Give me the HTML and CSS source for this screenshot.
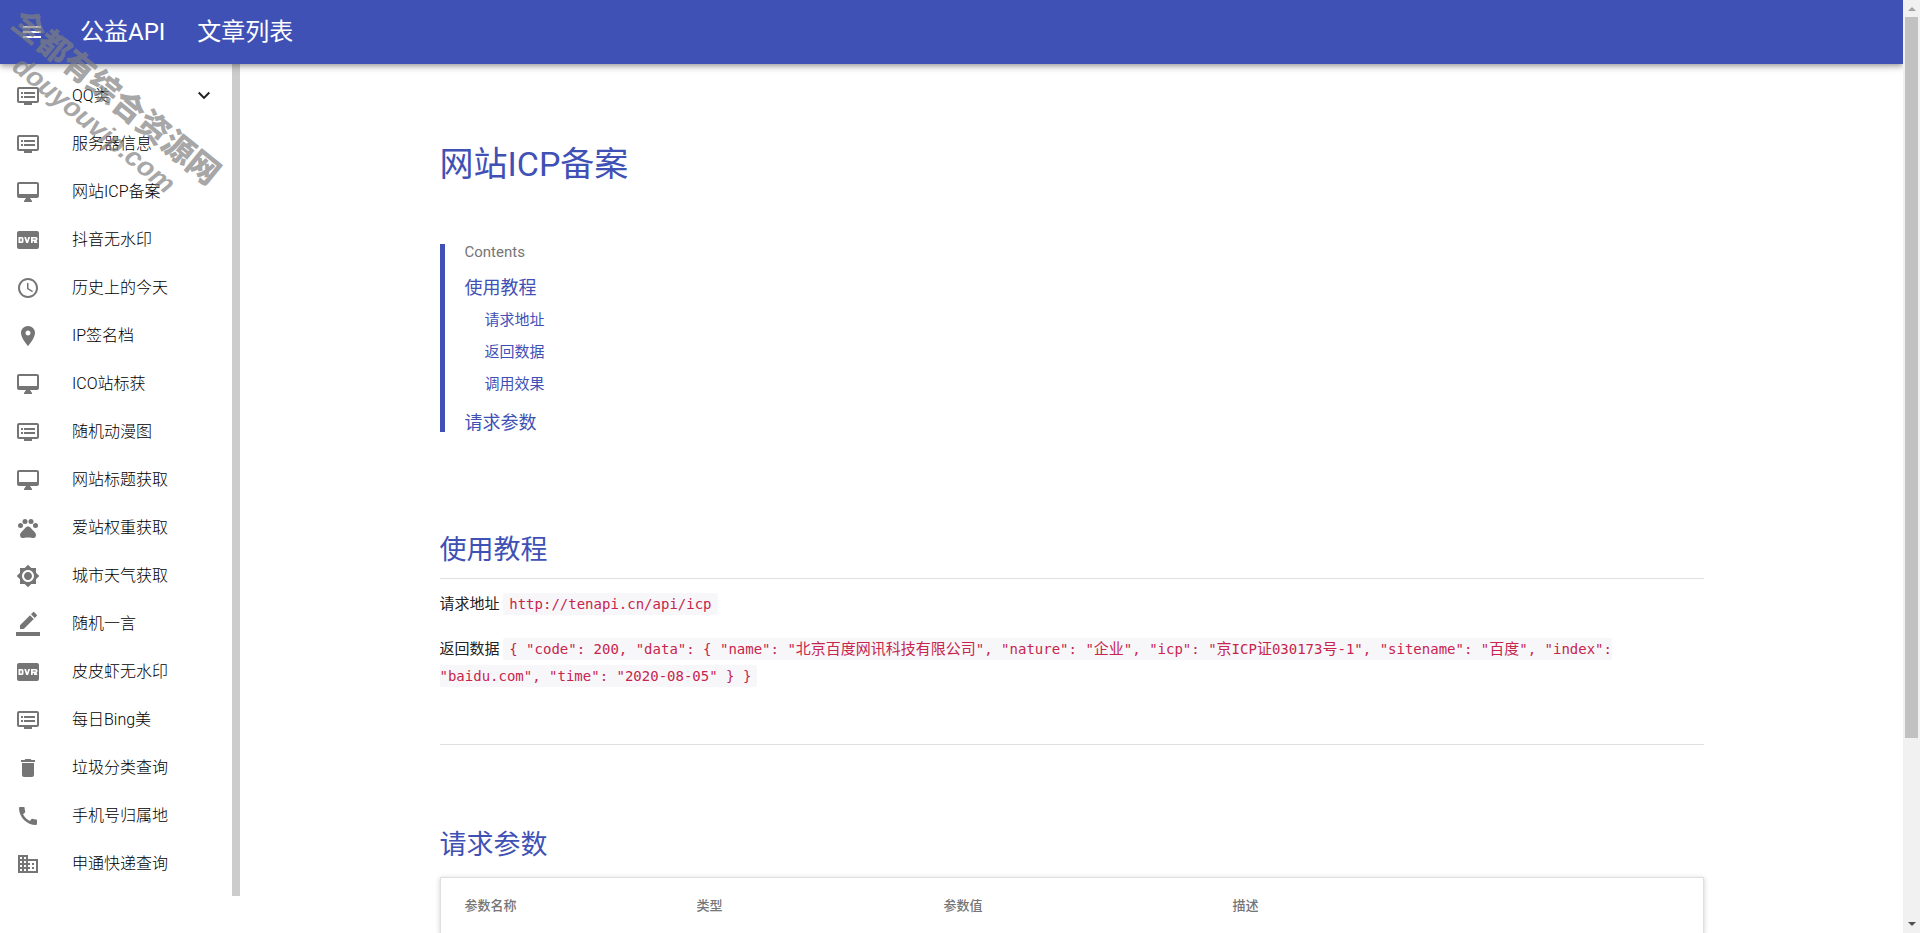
FILE: index.html
```html
<!DOCTYPE html>
<html lang="zh-CN">
<head>
<meta charset="utf-8">
<title>网站ICP备案</title>
<link rel="stylesheet" href="styles.css">
</head>
<body>
<svg class="sprite" aria-hidden="true">
  <symbol id="i-menu" viewBox="0 0 24 24"><path d="M3 18h18v-2H3v2zm0-5h18v-2H3v2zm0-7v2h18V6H3z"/></symbol>
  <symbol id="i-chevron" viewBox="0 0 24 24"><path d="M7.41 7.84L12 12.42l4.59-4.58L18 9.25l-6 6-6-6z"/></symbol>
  <symbol id="i-list" viewBox="0 0 24 24"><path d="M21 3H3c-1.1 0-2 .9-2 2v12c0 1.1.9 2 2 2h5v2h8v-2h5c1.1 0 1.99-.9 1.99-2L23 5c0-1.1-.9-2-2-2zm0 14H3V5h18v12zm-2-9H8v2h11V8zm0 4H8v2h11v-2zM7 8H5v2h2V8zm0 4H5v2h2v-2z"/></symbol>
  <symbol id="i-desktop" viewBox="0 0 24 24"><path d="M21 2H3c-1.1 0-2 .9-2 2v12c0 1.1.9 2 2 2h7l-2 3v1h8v-1l-2-3h7c1.1 0 2-.9 2-2V4c0-1.1-.9-2-2-2zm0 12H3V4h18v10z"/></symbol>
  <symbol id="i-dvr" viewBox="0 0 24 24"><path fill-rule="evenodd" d="M3 3h18a2 2 0 0 1 2 2v14a2 2 0 0 1-2 2H3a2 2 0 0 1-2-2V5a2 2 0 0 1 2-2zM2.500 9v6H6a1.500 1.500 0 0 0 1.500-1.500v-3A1.500 1.500 0 0 0 6 9zM4.300 10.500H5.700v3H4.300zM8.200 9l2 6h1.900l2-6h-1.800l-1.150 3.600L10 9zM15 9v6h1.700v-2h.8l.9 2H21.500l-1-2.200a1.500 1.500 0 0 0 1-1.300v-1A1.500 1.500 0 0 0 20 9zM16.700 10.400h3v1.200h-3z"/></symbol>
  <symbol id="i-clock" viewBox="0 0 24 24"><path d="M11.990 2C6.470 2 2 6.480 2 12s4.470 10 9.990 10C17.520 22 22 17.520 22 12S17.520 2 11.990 2zM12 20c-4.420 0-8-3.580-8-8s3.580-8 8-8 8 3.580 8 8-3.580 8-8 8zm.5-13H11v6l5.250 3.150.75-1.230-4.500-2.670z"/></symbol>
  <symbol id="i-place" viewBox="0 0 24 24"><path d="M12 2C8.130 2 5 5.130 5 9c0 5.250 7 13 7 13s7-7.750 7-13c0-3.870-3.130-7-7-7zm0 9.500c-1.380 0-2.500-1.120-2.500-2.500s1.120-2.500 2.500-2.500 2.500 1.120 2.500 2.500-1.120 2.500-2.500 2.500z"/></symbol>
  <symbol id="i-pets" viewBox="0 0 24 24"><circle cx="4.500" cy="9.500" r="2.500"/><circle cx="9" cy="5.500" r="2.500"/><circle cx="15" cy="5.500" r="2.500"/><circle cx="19.500" cy="9.500" r="2.500"/><path d="M17.340 14.860c-.87-1.020-1.600-1.890-2.480-2.910-.46-.54-1.050-1.080-1.750-1.320-.11-.04-.22-.07-.33-.09-.25-.04-.52-.04-.78-.04s-.53 0-.79.05c-.11.02-.22.05-.33.09-.7.24-1.280.78-1.750 1.320-.87 1.020-1.600 1.890-2.480 2.910-1.310 1.310-2.920 2.760-2.620 4.790.29 1.020 1.020 2.030 2.330 2.320.73.15 3.060-.44 5.540-.44h.18c2.480 0 4.810.58 5.540.44 1.310-.29 2.040-1.310 2.330-2.320.31-2.040-1.300-3.490-2.610-4.800z"/></symbol>
  <symbol id="i-sun" viewBox="0 0 24 24"><path d="M20 8.690V4h-4.690L12 .69 8.690 4H4v4.690L.69 12 4 15.310V20h4.690L12 23.310 15.310 20H20v-4.690L23.310 12 20 8.690zM12 18c-3.310 0-6-2.690-6-6s2.690-6 6-6 6 2.690 6 6-2.690 6-6 6zm0-10c-2.210 0-4 1.790-4 4s1.790 4 4 4 4-1.790 4-4-1.790-4-4-4z"/></symbol>
  <symbol id="i-pen" viewBox="0 0 24 24"><path d="M17.750 7L14 3.250l-10 10V17h3.750l10-10zm2.960-2.960c.39-.39.39-1.020 0-1.410L18.370.290c-.39-.39-1.020-.39-1.410 0L15 2.250 18.750 6l1.960-1.960zM0 20h24v4H0z"/></symbol>
  <symbol id="i-trash" viewBox="0 0 24 24"><path d="M6 19c0 1.100.9 2 2 2h8c1.100 0 2-.9 2-2V7H6v12zM19 4h-3.500l-1-1h-5l-1 1H5v2h14V4z"/></symbol>
  <symbol id="i-phone" viewBox="0 0 24 24"><path d="M20.010 15.380c-1.230 0-2.420-.2-3.530-.56-.35-.12-.74-.03-1.010.24l-1.570 1.970c-2.830-1.350-5.480-3.900-6.890-6.830l1.950-1.660c.27-.28.35-.67.24-1.020-.37-1.110-.56-2.300-.56-3.530 0-.54-.45-.99-.99-.99H4.190C3.650 3 3 3.240 3 3.990 3 13.280 10.730 21 20.010 21c.71 0 .99-.63.99-1.180v-3.450c0-.54-.45-.99-.99-.99z"/></symbol>
  <symbol id="i-building" viewBox="0 0 24 24"><path d="M12 7V3H2v18h20V7H12zM6 19H4v-2h2v2zm0-4H4v-2h2v2zm0-4H4V9h2v2zm0-4H4V5h2v2zm4 12H8v-2h2v2zm0-4H8v-2h2v2zm0-4H8V9h2v2zm0-4H8V5h2v2zm10 12h-8v-2h2v-2h-2v-2h2v-2h-2V9h8v10zm-2-8h-2v2h2v-2zm0 4h-2v2h2v-2z"/></symbol>
</svg>

<div class="page">
  <header class="appbar">
    <button class="menu-button" type="button" aria-label="菜单"><svg class="icon"><use href="#i-menu"/></svg></button>
    <a class="appbar-link" href="#">公益API</a>
    <a class="appbar-link" href="#">文章列表</a>
  </header>

  <div class="body">
    <nav class="drawer">
      <a class="item" href="#"><svg class="icon"><use href="#i-list"/></svg><span class="label">QQ类</span><svg class="icon arrow"><use href="#i-chevron"/></svg></a>
      <a class="item" href="#"><svg class="icon"><use href="#i-list"/></svg><span class="label">服务器信息</span></a>
      <a class="item" href="#"><svg class="icon"><use href="#i-desktop"/></svg><span class="label">网站ICP备案</span></a>
      <a class="item" href="#"><svg class="icon"><use href="#i-dvr"/></svg><span class="label">抖音无水印</span></a>
      <a class="item" href="#"><svg class="icon"><use href="#i-clock"/></svg><span class="label">历史上的今天</span></a>
      <a class="item" href="#"><svg class="icon"><use href="#i-place"/></svg><span class="label">IP签名档</span></a>
      <a class="item" href="#"><svg class="icon"><use href="#i-desktop"/></svg><span class="label">ICO站标获</span></a>
      <a class="item" href="#"><svg class="icon"><use href="#i-list"/></svg><span class="label">随机动漫图</span></a>
      <a class="item" href="#"><svg class="icon"><use href="#i-desktop"/></svg><span class="label">网站标题获取</span></a>
      <a class="item" href="#"><svg class="icon"><use href="#i-pets"/></svg><span class="label">爱站权重获取</span></a>
      <a class="item" href="#"><svg class="icon"><use href="#i-sun"/></svg><span class="label">城市天气获取</span></a>
      <a class="item" href="#"><svg class="icon"><use href="#i-pen"/></svg><span class="label">随机一言</span></a>
      <a class="item" href="#"><svg class="icon"><use href="#i-dvr"/></svg><span class="label">皮皮虾无水印</span></a>
      <a class="item" href="#"><svg class="icon"><use href="#i-list"/></svg><span class="label">每日Bing美</span></a>
      <a class="item" href="#"><svg class="icon"><use href="#i-trash"/></svg><span class="label">垃圾分类查询</span></a>
      <a class="item" href="#"><svg class="icon"><use href="#i-phone"/></svg><span class="label">手机号归属地</span></a>
      <a class="item" href="#"><svg class="icon"><use href="#i-building"/></svg><span class="label">申通快递查询</span></a>
    </nav>

    <main class="content">
      <h1 class="title">网站ICP备案</h1>
      <nav class="toc">
        <p class="toc-title">Contents</p>
        <a class="toc-link" href="#usage">使用教程</a>
        <a class="toc-sub" href="#usage">请求地址</a>
        <a class="toc-sub" href="#usage">返回数据</a>
        <a class="toc-sub" href="#usage">调用效果</a>
        <a class="toc-link" href="#params">请求参数</a>
      </nav>
      <section class="section usage" id="usage">
        <h2 class="heading ruled">使用教程</h2>
        <p class="text">请求地址 <code class="code">http://tenapi.cn/api/icp</code></p>
        <p class="text">返回数据 <code class="code">{ "code": 200, "data": { "name": "<span class="han">北京百度网讯科技有限公司</span>", "nature": "<span class="han">企业</span>", "icp": "<span class="han">京</span>ICP<span class="han">证</span>030173<span class="han">号</span>-1", "sitename": "<span class="han">百度</span>", "index": "baidu.com", "time": "2020-08-05" } }</code></p>
      </section>
      <hr class="divider">
      <section class="section" id="params">
        <h2 class="heading">请求参数</h2>
        <table class="table">
          <thead>
            <tr><th class="col-name">参数名称</th><th class="col-type">类型</th><th class="col-value">参数值</th><th>描述</th></tr>
          </thead>
        </table>
      </section>
    </main>
  </div>
</div>

<div class="scrollbar" aria-hidden="true">
  <span class="arrow-up"></span>
  <span class="thumb"></span>
  <span class="arrow-down"></span>
</div>

<div class="watermark" aria-hidden="true">
  <span class="mark-name">全都有综合资源网</span>
  <span class="mark-site">douyouvip.com</span>
</div>
</body>
</html>
```

FILE: styles.css
```css
* { box-sizing: border-box; }

body {
  margin: 0;
  height: 100vh;
  display: flex;
  overflow: hidden;
  background: #fff;
  color: #212121;
  font-family: Roboto, "Noto Sans CJK SC", sans-serif;
  font-size: 15px;
  line-height: 27px;
}

a { color: inherit; text-decoration: none; }

.sprite { display: none; }

.icon {
  width: 24px;
  height: 24px;
  flex: none;
  fill: currentColor;
}

.page {
  flex: 1;
  min-width: 0;
  height: 100vh;
  overflow: hidden;
}

/* App bar */
.appbar {
  position: relative;
  z-index: 2;
  display: flex;
  align-items: center;
  gap: 32px;
  height: 64px;
  padding: 0 20px;
  background: #3f51b5;
  color: #fff;
  box-shadow: 0 2px 4px -1px rgba(0, 0, 0, .2), 0 4px 5px rgba(0, 0, 0, .14), 0 1px 10px rgba(0, 0, 0, .12);
}

.menu-button {
  display: flex;
  padding: 0;
  margin-right: 4px;
  border: 0;
  background: none;
  color: inherit;
}

.appbar-link {
  font-size: 24px;
  font-weight: 400;
  line-height: 32px;
}

/* Layout */
.body {
  display: flex;
  align-items: flex-start;
}

/* Drawer */
.drawer {
  flex: none;
  width: 240px;
  padding: 8px 0;
  border-right: 8px solid #ccc;
}

.item {
  display: flex;
  align-items: center;
  gap: 32px;
  height: 48px;
  padding: 0 16px;
  color: #000;
  font-size: 16px;
  font-weight: 300;
}

.item .icon { color: #757575; }
.item .arrow { color: #212121; }

.label {
  flex: 1;
  padding-bottom: 2px;
}

/* Content */
.content {
  flex: 0 1 1264px;
  margin: 0 auto;
  padding-top: 72px;
}

.title {
  margin: 0 0 52px;
  color: #3f51b5;
  font-size: 34px;
  font-weight: 400;
  line-height: 56px;
}

.toc {
  display: flex;
  flex-direction: column;
  align-items: flex-start;
  padding: 0 0 1px 20px;
  border-left: 5px solid #3f51b5;
  color: #3f51b5;
}

.toc-title {
  margin: 0 0 20px;
  color: #757575;
  line-height: 16px;
}

.toc-link {
  font-size: 18px;
  line-height: 16px;
}

.toc-sub {
  margin-left: 20px;
  line-height: 32px;
}

.toc-sub + .toc-link { margin-top: 15px; }
.toc-link + .toc-sub { margin-top: 8px; }

.section { padding-top: 80px; }
.usage { padding-top: 98px; }

.heading {
  margin: 0;
  padding-bottom: 12px;
  color: #3f51b5;
  font-size: 27px;
  font-weight: 400;
  line-height: 40px;
}

.ruled {
  margin-bottom: 12px;
  padding-bottom: 8px;
  border-bottom: 1px solid #e0e0e0;
}

.text { margin: 0 0 18px; }

.code {
  padding: 3px 6px;
  border-radius: 2px;
  background: #f7f7f9;
  color: #c7254e;
  font-family: "DejaVu Sans Mono", "Noto Sans CJK SC", monospace;
  font-size: 14px;
  line-height: 20px;
}

.han {
  font-family: "Noto Sans CJK SC", sans-serif;
  font-size: 15px;
}

.divider {
  height: 1px;
  margin: 54px 0 0;
  border: 0;
  background: #e0e0e0;
}

.table {
  width: 100%;
  table-layout: fixed;
  border: 1px solid #e0e0e0;
  border-spacing: 0;
  box-shadow: 0 1px 5px rgba(0, 0, 0, .2);
}

.table th {
  height: 56px;
  padding: 0 24px 2px;
  color: #757575;
  font-size: 13px;
  font-weight: 500;
  text-align: left;
}

.col-name { width: 232px; }
.col-type { width: 247px; }
.col-value { width: 289px; }

/* Scrollbar */
.scrollbar {
  display: flex;
  flex-direction: column;
  align-items: center;
  flex: none;
  width: 17px;
  height: 100vh;
  padding: 7px 2px;
  background: #f1f1f1;
}

.arrow-up,
.arrow-down {
  border: 4px solid transparent;
  border-top: 0;
  border-bottom-color: #a3a3a3;
}

.arrow-down {
  border-top: 4px solid #505050;
  border-bottom: 0;
  margin-top: auto;
}

.thumb {
  width: 13px;
  height: 78.5%;
  margin-top: 6px;
  background: #c1c1c1;
}

/* Watermark */
.watermark {
  position: absolute;
  top: 75px;
  left: -22px;
  z-index: 3;
  display: flex;
  flex-direction: column;
  align-items: center;
  color: rgba(128, 128, 128, .7);
  font-family: "Liberation Sans", "Noto Sans CJK SC", sans-serif;
  font-weight: 900;
  transform: rotate(39deg);
  pointer-events: none;
}

.mark-name {
  font-size: 32px;
  line-height: 38px;
}

.mark-site {
  font-size: 27px;
  font-style: italic;
  line-height: 32px;
}
```
